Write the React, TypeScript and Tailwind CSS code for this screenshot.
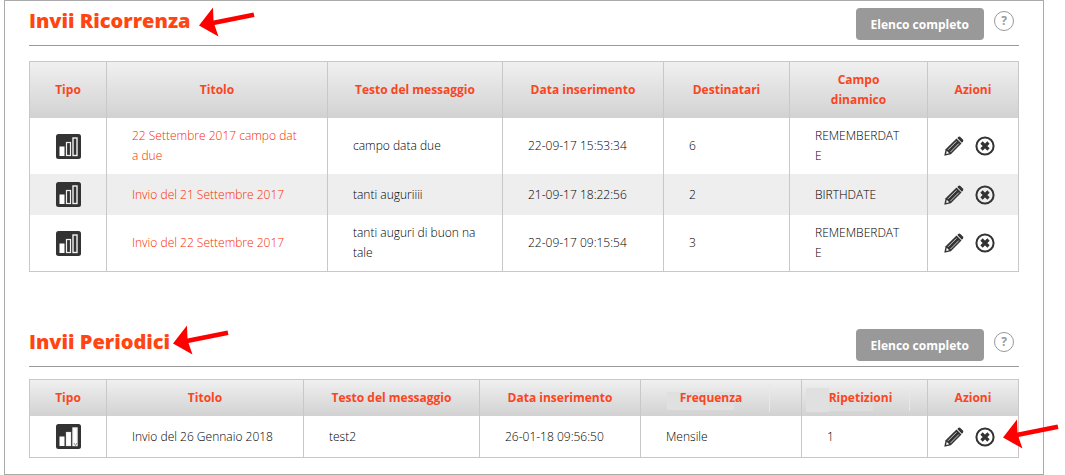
import { ReactNode } from "react";

import clsx from "clsx";

type Column = {
  label: string;
  width: string;
  className?: string;
  patches?: string[];
};

type Shipment = {
  id: number;
  bars: number;
  cells: string[];
  linked?: boolean;
  pointed?: boolean;
};

const recurringColumns: Column[] = [
  { label: "Tipo", width: "w-[77px]" },
  { label: "Titolo", width: "w-[221px]" },
  { label: "Testo del messaggio", width: "w-[175px]" },
  { label: "Data inserimento", width: "w-[161px]" },
  { label: "Destinatari", width: "w-[126px]" },
  { label: "Campo dinamico", width: "w-[138px]", className: "px-6" },
  { label: "Azioni", width: "w-[91px]" },
];

const recurringShipments: Shipment[] = [
  {
    id: 1,
    bars: 1,
    linked: true,
    cells: [
      "22 Settembre 2017 campo data due",
      "campo data due",
      "22-09-17 15:53:34",
      "6",
      "REMEMBERDATE",
    ],
  },
  {
    id: 2,
    bars: 1,
    linked: true,
    cells: [
      "Invio del 21 Settembre 2017",
      "tanti auguriiii",
      "21-09-17 18:22:56",
      "2",
      "BIRTHDATE",
    ],
  },
  {
    id: 3,
    bars: 1,
    linked: true,
    cells: [
      "Invio del 22 Settembre 2017",
      "tanti auguri di buon natale",
      "22-09-17 09:15:54",
      "3",
      "REMEMBERDATE",
    ],
  },
];

const periodicColumns: Column[] = [
  { label: "Tipo", width: "w-[77px]" },
  { label: "Titolo", width: "w-[197px]" },
  { label: "Testo del messaggio", width: "w-[176px]" },
  { label: "Data inserimento", width: "w-[161px]" },
  {
    label: "Frequenza",
    width: "w-[161px]",
    className: "pr-5",
    patches: [
      "left-[26px] top-3 h-[18px] w-[67px] bg-[#e0e0e0]",
      "left-32 top-1 h-7 w-px bg-[#e8e8e8]",
    ],
  },
  {
    label: "Ripetizioni",
    width: "w-[126px]",
    className: "pr-2",
    patches: [
      "left-1 top-2 h-6 w-[23px] bg-[#e0e0e0]",
      "left-[27px] top-5 h-[11px] w-11 bg-[#dedede]",
      "left-[107px] top-[6px] h-[25px] w-px bg-[#e8e8e8]",
    ],
  },
  { label: "Azioni", width: "w-[91px]" },
];

const periodicShipments: Shipment[] = [
  {
    id: 4,
    bars: 3,
    pointed: true,
    cells: [
      "Invio del 26 Gennaio 2018",
      "test2",
      "26-01-18 09:56:50",
      "Mensile",
      "1",
    ],
  },
];

function Arrow({ className }: { className?: string }) {
  return (
    <svg
      width="57"
      height="31"
      viewBox="0 0 57 31"
      className={className}
      aria-hidden="true"
    >
      <path
        d="M1 18.5 15 .5 15.5 13.5 55.500 5.500 56.500 10 16.500 18 20.500 29.500Z"
        fill="#f00"
      />
    </svg>
  );
}

function BarsIcon({ filled }: { filled: number }) {
  return (
    <svg
      width="25"
      height="25"
      viewBox="0 0 25 25"
      className="mx-auto block"
      role="img"
      aria-label="Statistiche"
    >
      <rect width="25" height="25" rx="2.500" fill="#333" />
      <rect x="3.500" y="12.500" width="5" height="9.500" fill="#fff" />
      <rect
        x="10.500"
        y="8.500"
        width="4"
        height="13"
        fill={filled > 1 ? "#fff" : "#333"}
        stroke="#f2f2f2"
        strokeWidth="1.200"
      />
      <rect
        x="17"
        y="4"
        width="4"
        height="17.500"
        fill={filled > 2 ? "#fff" : "#333"}
        stroke="#f2f2f2"
        strokeWidth="1.400"
      />
      {filled > 2 && (
        <path d="M18 19l1.500 2.500L21 19" fill="none" stroke="#777" strokeWidth=".8" />
      )}
    </svg>
  );
}

function PencilIcon() {
  return (
    <svg width="20" height="20" viewBox="0 0 20 20" className="block">
      <path
        d="M.3 19.700 1.600 13.200 12.500 2.500 17.500 7.400 6.800 18.200Z"
        fill="#333"
      />
      <path
        d="M13.300 1.900 14.600.8Q15.500.2 16.400 1L18.900 3.500Q19.700 4.400 19 5.400L17.900 6.700Z"
        fill="#333"
      />
      <path
        d="M4 13.800 12.500 5.300M6.300 16.200 14.800 7.600"
        stroke="#ddd"
        strokeWidth=".9"
      />
      <path d="M2.700 14.800 5.200 17.200 2.200 18Z" fill="#fff" />
    </svg>
  );
}

function DeleteIcon() {
  return (
    <svg width="20" height="20" viewBox="0 0 20 20" className="block">
      <circle cx="10" cy="10" r="8.600" fill="none" stroke="#333" strokeWidth="2" />
      <path d="M6.500 6.500 13.500 13.500M13.500 6.500 6.500 13.500" stroke="#333" strokeWidth="3.200" />
    </svg>
  );
}

function SectionHeader({
  title,
  children,
}: {
  title: string;
  children?: ReactNode;
}) {
  return (
    <div className="flex items-start border-b border-[#999] pt-[7px] pb-[5px]">
      <h2 className="text-xl leading-[26px] font-extrabold text-[#ff4612]">
        {title}
      </h2>
      {children}
      <button
        type="button"
        className="ml-auto h-8 rounded bg-[#999] px-[15px] pt-px text-xs font-bold text-white"
      >
        Elenco completo
      </button>
      <button
        type="button"
        aria-label="Aiuto"
        className="mt-[3px] mr-[5px] ml-[10px] flex size-5 items-center justify-center rounded-full border border-[#999] text-xs font-bold text-[#999]"
      >
        ?
      </button>
    </div>
  );
}

function ShipmentTable({
  label,
  columns,
  shipments,
}: {
  label: string;
  columns: Column[];
  shipments: Shipment[];
}) {
  return (
    <table
      aria-label={label}
      className="w-full table-fixed border-separate border-spacing-0 border-y border-l border-[#c8c8c8] text-xs leading-5"
    >
      <thead>
        <tr>
          {columns.map((column) => (
            <th
              key={column.label}
              scope="col"
              className={clsx(
                "relative border-r border-[#c8c8c8] bg-linear-to-b from-[#f0f0f0] to-[#d2d2d2] py-2 font-bold text-[#fa4522]",
                column.width,
                column.className
              )}
            >
              {column.patches?.map((patch) => (
                <span key={patch} className={clsx("absolute", patch)} />
              ))}
              <span className="relative">{column.label}</span>
            </th>
          ))}
        </tr>
      </thead>
      <tbody>
        {shipments.map((shipment) => (
          <tr key={shipment.id} className="even:bg-[#eee]">
            <td className="border-r border-[#c8c8c8] py-2">
              <BarsIcon filled={shipment.bars} />
            </td>
            {shipment.cells.map((cell, index) => (
              <td
                key={index}
                className="border-r border-[#c8c8c8] px-[25px] py-2 font-light break-all"
              >
                {index === 0 && shipment.linked ? (
                  <a href="#" className="text-[#fa2800]">
                    {cell}
                  </a>
                ) : (
                  cell
                )}
              </td>
            ))}
            <td className="border-r border-[#c8c8c8] pr-2">
              <div className="flex items-center justify-center gap-[11px]">
                <button type="button" aria-label="Modifica">
                  <PencilIcon />
                </button>
                <div className="relative">
                  <button type="button" aria-label="Elimina" className="block">
                    <DeleteIcon />
                  </button>
                  {shipment.pointed && (
                    <Arrow className="absolute -top-2 left-full ml-[7px] max-w-none" />
                  )}
                </div>
              </div>
            </td>
          </tr>
        ))}
      </tbody>
    </table>
  );
}

export default function App() {
  return (
    <main className="mr-[21px] ml-1 border border-[#aaa] bg-white px-6 pb-4 font-['Open_Sans',sans-serif] text-black">
      <section>
        <SectionHeader title="Invii Ricorrenza">
          <Arrow className="-mt-px -mb-px ml-2 shrink-0" />
        </SectionHeader>
        <div className="mt-[15px]">
          <ShipmentTable
            label="Invii Ricorrenza"
            columns={recurringColumns}
            shipments={recurringShipments}
          />
        </div>
      </section>
      <section className="mt-[50px]">
        <SectionHeader title="Invii Periodici">
          <Arrow className="-mt-1 ml-0.5 shrink-0" />
        </SectionHeader>
        <div className="mt-3">
          <ShipmentTable
            label="Invii Periodici"
            columns={periodicColumns}
            shipments={periodicShipments}
          />
        </div>
      </section>
    </main>
  );
}
